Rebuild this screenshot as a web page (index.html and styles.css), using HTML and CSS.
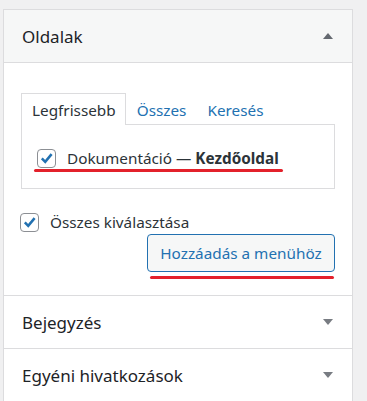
FILE: index.html
```html
<!DOCTYPE html>
<html lang="hu">
<head>
    <meta charset="UTF-8">
    <title>Menü – Oldalak</title>
    <link rel="stylesheet" href="styles.css">
</head>
<body>
    <div class="panel">
        <div class="section open">
            <div class="section-head">
                <h3>Oldalak</h3>
                <span class="arrow up"></span>
            </div>
            <div class="section-body">
                <ul class="tabs">
                    <li class="active">Legfrissebb</li>
                    <li>Összes</li>
                    <li>Keresés</li>
                </ul>
                <div class="tab-panel">
                    <label class="check-row marked">
                        <span class="box">
                            <svg viewBox="0 0 20 20" width="20" height="20"><path d="M4.5 10.5 L8.5 14.5 L16 5.5" /></svg>
                        </span>
                        <span>Dokumentáció — <strong>Kezdőoldal</strong></span>
                    </label>
                </div>
                <label class="check-row select-all">
                    <span class="box">
                        <svg viewBox="0 0 20 20" width="20" height="20"><path d="M4.5 10.5 L8.5 14.5 L16 5.5" /></svg>
                    </span>
                    <span>Összes kiválasztása</span>
                </label>
                <div class="actions">
                    <button class="button marked">Hozzáadás a menühöz</button>
                </div>
            </div>
        </div>
        <div class="section">
            <div class="section-head">
                <h3>Bejegyzés</h3>
                <span class="arrow"></span>
            </div>
        </div>
        <div class="section">
            <div class="section-head">
                <h3>Egyéni hivatkozások</h3>
                <span class="arrow"></span>
            </div>
        </div>
    </div>
</body>
</html>
```

FILE: styles.css
```css
body {
    margin: 0;
    padding: 9px 0 0 3px;
    background-color: #f0f0f1;
    font-family: "Noto Sans", "Open Sans", sans-serif;
    font-size: 15.3px;
    color: #2c3338;
}
.panel {
    width: 348px;
    border: 1px solid #dcdcde;
    border-bottom: none;
    background: #fff;
}
.section {
    border-bottom: 1px solid #dcdcde;
}
.section-head {
    height: 52px;
    display: flex;
    align-items: center;
    justify-content: space-between;
    padding: 0 19px 0 18px;
    background: #fff;
}
.open .section-head {
    background: #f6f7f7;
    border-bottom: 1px solid #dcdcde;
}
.section-head h3 {
    margin: 0;
    font-size: 17px;
    font-weight: 400;
    color: #1d2327;
}
.arrow {
    width: 0;
    height: 0;
    border-left: 5px solid transparent;
    border-right: 5px solid transparent;
    border-top: 6px solid #787c82;
}
.arrow.up {
    border-top: none;
    border-bottom: 6px solid #646970;
}
.section-body {
    padding: 30px 17px 23px 17px;
}
.tabs {
    list-style: none;
    margin: 0;
    padding: 0;
    display: flex;
    position: relative;
    z-index: 1;
}
.tabs li {
    height: 30px;
    line-height: 33px;
    padding: 0 9px 0 10px;
    color: #2271b1;
    border: 1px solid transparent;
    border-bottom: none;
}
.tabs li.active {
    color: #2c3338;
    background: #fff;
    border-color: #dcdcde;
    height: 31px;
}
.tab-panel {
    border: 1px solid #dcdcde;
    height: 40px;
    padding: 23px 0 0 15px;
    margin-top: -1px;
}
.check-row {
    display: flex;
    align-items: center;
    gap: 11px;
    position: relative;
    width: fit-content;
}
.box {
    width: 17px;
    height: 17px;
    border: 1px solid #8c8f94;
    border-radius: 4px;
    display: flex;
    align-items: center;
    justify-content: center;
    background: #fff;
}
.box svg {
    fill: none;
    stroke: #2271b1;
    stroke-width: 3;
}
.check-row.marked::after {
    content: "";
    position: absolute;
    left: -3px;
    right: -4px;
    bottom: -4px;
    height: 3px;
    border-radius: 2px;
    background: #e3212b;
}
.select-all {
    margin-top: 23px;
}
.select-all .box {
    margin-left: -1px;
}
.actions {
    display: flex;
    justify-content: flex-end;
    margin-top: 2px;
}
.button {
    position: relative;
    height: 38px;
    width: 188px;
    padding: 0;
    border: 1px solid #2271b1;
    border-radius: 4px;
    background: #f6f7f7;
    color: #2271b1;
    font-family: inherit;
    font-size: 15.3px;
}
.button.marked::after {
    content: "";
    position: absolute;
    left: 2px;
    right: 0;
    bottom: -8px;
    height: 3px;
    border-radius: 2px;
    background: #e3212b;
}
```
